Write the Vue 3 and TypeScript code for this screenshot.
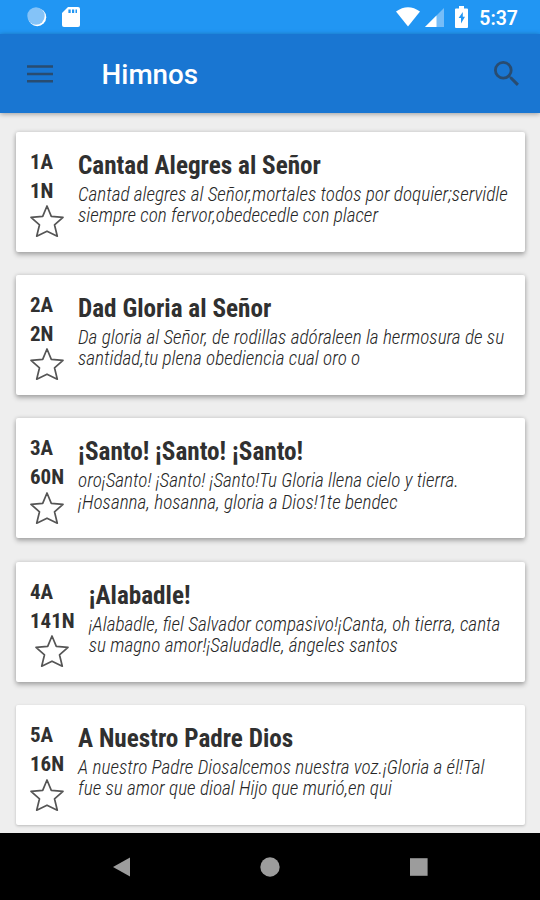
<script setup lang="ts">
interface Hymn {
  current: string
  former: string
  title: string
  lines: string[]
}

const hymns: Hymn[] = [
  { current: '1A', former: '1N', title: 'Cantad Alegres al Señor', lines: ['Cantad alegres al Señor,mortales todos por doquier;servidle', 'siempre con fervor,obedecedle con placer'] },
  { current: '2A', former: '2N', title: 'Dad Gloria al Señor', lines: ['Da gloria al Señor, de rodillas adóraleen la hermosura de su', 'santidad,tu plena obediencia cual oro o'] },
  { current: '3A', former: '60N', title: '¡Santo! ¡Santo! ¡Santo!', lines: ['oro¡Santo! ¡Santo! ¡Santo!Tu Gloria llena cielo y tierra.', '¡Hosanna, hosanna, gloria a Dios!1te bendec'] },
  { current: '4A', former: '141N', title: '¡Alabadle!', lines: ['¡Alabadle, fiel Salvador compasivo!¡Canta, oh tierra, canta', 'su magno amor!¡Saludadle, ángeles santos'] },
  { current: '5A', former: '16N', title: 'A Nuestro Padre Dios', lines: ['A nuestro Padre Diosalcemos nuestra voz.¡Gloria a él!Tal', 'fue su amor que dioal Hijo que murió,en qui'] },
]
</script>

<template>
  <div class="screen">
    <header class="status">
      <svg class="sync" viewBox="0 0 20 20">
        <circle cx="10.2" cy="10.2" r="9" fill="#fff" />
        <circle cx="9" cy="9" r="8.7" fill="#84c3f8" />
      </svg>
      <svg class="sd" viewBox="0 0 18 20">
        <path d="M6 0H16Q18 0 18 2V18Q18 20 16 20H2Q0 20 0 18V6Z" fill="#fff" />
        <path d="M6.4 2.5H8.7V6H6.4ZM10 2.5H12.2V6H10ZM13.5 2.5H15V6H13.5Z" fill="#2196f3" />
      </svg>
      <span class="spacer"></span>
      <svg class="wifi" viewBox="0 0 24 20">
        <path d="M0 4.6Q12-4.3 24 4.6L12 19.5Z" fill="#fff" />
      </svg>
      <svg class="signal" viewBox="0 0 19 19">
        <path d="M0 19L19 0V19Z" fill="#76bdf8" />
        <path d="M0 19L11.5 7.5V19Z" fill="#fff" />
      </svg>
      <svg class="battery" viewBox="0 0 13 22">
        <path d="M4 0H9V2.5H12Q13 2.5 13 3.5V21Q13 22 12 22H1Q0 22 0 21V3.5Q0 2.5 1 2.5H4Z" fill="#fff" />
        <path d="M7.8 6L3.6 12H6V17.5L10 10.8H7.8Z" fill="#2196f3" />
      </svg>
      <time>5:37</time>
    </header>
    <div class="appbar">
      <svg class="menu" viewBox="0 0 26 18">
        <path d="M0 1.5H26M0 9H26M0 16.3H26" stroke="#294c70" stroke-width="2.6" />
      </svg>
      <h1>Himnos</h1>
      <span class="spacer"></span>
      <svg class="search" viewBox="3 3 17.5 17.5">
        <path fill="#294c70" d="M15.5 14h-.79l-.28-.27A6.471 6.471 0 0 0 16 9.5 6.5 6.5 0 1 0 9.5 16c1.61 0 3.09-.59 4.23-1.57l.27.28v.79l5 4.99L20.49 19l-4.99-5zm-6 0C7.01 14 5 11.99 5 9.5S7.01 5 9.5 5 14 7.01 14 9.5 11.99 14 9.5 14z" />
      </svg>
    </div>
    <main class="list">
      <article v-for="hymn in hymns" :key="hymn.current" class="card">
        <div class="numbers">
          <span>{{ hymn.current }}</span>
          <span>{{ hymn.former }}</span>
          <svg class="star" viewBox="0 0 36 34">
            <path d="M18 2L22.3 12.3L34 13.4L25.5 20.8L28.3 32.2L18 27.2L7.7 32.2L10.5 20.8L2 13.4L13.7 12.3Z" fill="none" stroke="#555" stroke-width="1.7" stroke-linejoin="round" />
          </svg>
        </div>
        <div class="body">
          <h2>{{ hymn.title }}</h2>
          <p><span v-for="line in hymn.lines" :key="line">{{ line }}</span></p>
        </div>
      </article>
    </main>
    <nav class="nav">
      <svg viewBox="0 0 20 20"><path d="M1 10L18 .6V19.4Z" /></svg>
      <svg viewBox="0 0 20 20"><circle cx="10" cy="10" r="9.7" /></svg>
      <svg viewBox="0 0 20 20"><path d="M1 1.2H18.6V18.8H1Z" /></svg>
    </nav>
  </div>
</template>

<style>
body {
  margin: 0;
}
</style>

<style scoped>
.screen {
  width: 540px;
  height: 900px;
  display: flex;
  flex-direction: column;
  overflow: hidden;
  background: #eee;
  font-family: Roboto, "Liberation Sans", sans-serif;
  color: #303030;
}
svg {
  display: block;
  flex: none;
}
.spacer {
  flex: 1;
}
.status {
  height: 34px;
  flex: none;
  display: flex;
  align-items: center;
  box-sizing: border-box;
  padding: 0 22px 0 27px;
  background: #2196f3;
  color: #fff;
}
.sync {
  width: 20px;
  height: 20px;
}
.sd {
  width: 18px;
  height: 20px;
  margin-left: 15px;
}
.wifi {
  width: 24px;
  height: 20px;
}
.signal {
  width: 19px;
  height: 19px;
  margin: 1px 0 0 5px;
}
.battery {
  width: 13px;
  height: 22px;
  margin: 0 11px 1px 11px;
}
time {
  font-size: 19.5px;
  font-weight: 600;
  line-height: 24px;
  padding-top: 3px;
}
.appbar {
  position: relative;
  height: 79px;
  flex: none;
  display: flex;
  align-items: center;
  box-sizing: border-box;
  padding: 0 21px 0 27px;
  background: #1976d2;
  box-shadow: 0 1px 5px rgba(0, 0, 0, 0.35);
}
.menu {
  width: 26px;
  height: 18px;
}
h1 {
  margin: 3px 0 0 48.6px;
  color: #fff;
  font-size: 27.8px;
  font-weight: 550;
  line-height: 34px;
}
.search {
  width: 25px;
  height: 25px;
  margin-bottom: 1px;
}
.list {
  flex: 1;
  min-height: 0;
  overflow: hidden;
  display: flex;
  flex-direction: column;
  gap: 23.4px;
  padding: 18.6px 15px 0 16px;
}
.card {
  height: 120px;
  flex: none;
  box-sizing: border-box;
  display: flex;
  gap: 14px;
  padding: 15px 0 0 14px;
  border-radius: 2px;
  background: #fff;
  box-shadow: 0 3px 5px rgba(0, 0, 0, 0.26), 0 0 4px rgba(0, 0, 0, 0.16);
  font-family: "Roboto Condensed", Roboto, sans-serif;
  font-stretch: condensed;
}
.card:last-child {
  box-shadow: 0 1px 3px rgba(0, 0, 0, 0.22);
}
.numbers {
  min-width: 34px;
  display: flex;
  flex-direction: column;
  padding-top: 1px;
  font-size: 21px;
  font-weight: 700;
  line-height: 29px;
}
.star {
  width: 36px;
  height: 34px;
  align-self: center;
  margin: -1.6px -1px 0;
}
h2 {
  margin: 3px 0 0;
  font-size: 25.2px;
  font-weight: 700;
  line-height: 32px;
}
p {
  margin: 2px 0 0;
  font-size: 19.2px;
  font-style: italic;
  font-weight: 300;
  line-height: 21.3px;
  color: #262626;
}
p span {
  display: block;
  white-space: nowrap;
}
.nav {
  height: 67px;
  flex: none;
  display: flex;
  align-items: center;
  justify-content: center;
  gap: 128.5px;
  background: #000;
  fill: #9c9c9c;
}
.nav svg {
  width: 20px;
  height: 20px;
}
</style>
